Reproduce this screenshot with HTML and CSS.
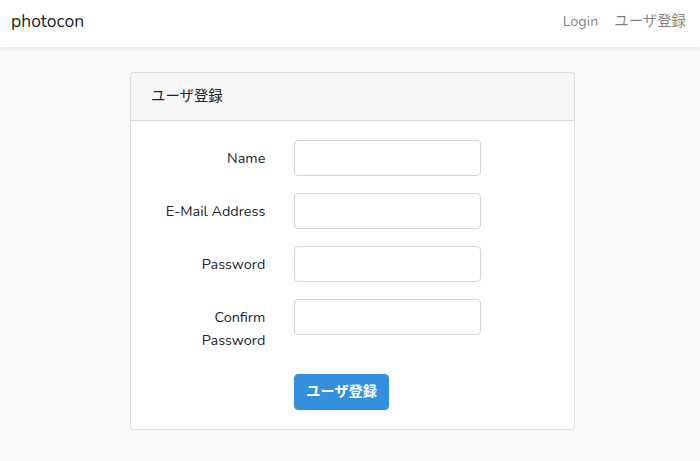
FILE: index.html
```html
<!DOCTYPE html>
<html lang="ja">
<head>
<meta charset="utf-8">
<title>photocon</title>
<link rel="stylesheet" href="styles.css">
</head>
<body>
<nav class="navbar">
  <a class="brand" href="#">photocon</a>
  <ul class="nav-links">
    <li><a href="#">Login</a></li>
    <li><a href="#">ユーザ登録</a></li>
  </ul>
</nav>
<main class="main">
  <div class="card">
    <div class="card-header">ユーザ登録</div>
    <div class="card-body">
      <form class="form">
        <div class="form-row">
          <label class="form-label">Name</label>
          <div class="form-field"><input class="form-input" type="text"></div>
        </div>
        <div class="form-row">
          <label class="form-label">E-Mail Address</label>
          <div class="form-field"><input class="form-input" type="email"></div>
        </div>
        <div class="form-row">
          <label class="form-label">Password</label>
          <div class="form-field"><input class="form-input" type="password"></div>
        </div>
        <div class="form-row">
          <label class="form-label">Confirm<br>Password</label>
          <div class="form-field"><input class="form-input" type="password"></div>
        </div>
        <div class="form-row form-row-last">
          <div class="form-label"></div>
          <div class="form-field"><button class="btn-primary" type="button">ユーザ登録</button></div>
        </div>
      </form>
    </div>
  </div>
</main>
</body>
</html>
```
FILE: styles.css
```css
* { box-sizing: border-box; }
html, body {
  margin: 0;
  padding: 0;
}
body {
  background: #f8fafc;
  color: #212529;
  font-family: Nunito, Lato, "Noto Sans CJK JP", sans-serif;
  font-size: 14.4px;
  line-height: 1.6;
}
.navbar {
  height: 47px;
  background: #fff;
  box-shadow: 0 2px 4px rgba(0,0,0,.075);
  display: flex;
  align-items: center;
  justify-content: space-between;
  padding: 0 14px 0 11px;
}
.brand {
  color: rgba(0,0,0,.9);
  text-decoration: none;
  font-size: 17.5px;
  line-height: 1;
  margin-top: -4px;
}
.nav-links {
  list-style: none;
  margin: -3px 0 0 0;
  padding: 0;
  display: flex;
  gap: 16px;
}
.nav-links a {
  color: rgba(0,0,0,.5);
  text-decoration: none;
  font-size: 14.4px;
}
.main {
  padding: 25px 125px 24px 130px;
}
.card {
  background: #fff;
  border: 1px solid rgba(0,0,0,.125);
  border-radius: 4px;
}
.card-header {
  background: rgba(0,0,0,.03);
  border-bottom: 1px solid rgba(0,0,0,.125);
  padding: 12px 20px;
  line-height: 23px;
}
.card-body {
  padding: 19px 20px 19px;
}
.form-row {
  display: flex;
  margin: 0 -15px 17px;
}
.form-row-last { margin-bottom: 0; }
.form-label {
  flex: 0 0 33.3333%;
  padding: 7px 15px 6px;
  text-align: right;
  line-height: 22.5px;
}
.form-field {
  flex: 0 0 50%;
  padding: 0 16px 0 14px;
}
.form-input {
  display: block;
  width: 100%;
  height: 36px;
  border: 1px solid #ced4da;
  border-radius: 4px;
  background: #fff;
  font: inherit;
  padding: 6px 12px;
}
.btn-primary {
  background: #3490dc;
  border: 1px solid #3490dc;
  color: #fff;
  border-radius: 4px;
  font-family: inherit;
  font-size: 14.2px;
  font-weight: 700;
  line-height: 22px;
  padding: 6px 11px;
  cursor: pointer;
}
```
